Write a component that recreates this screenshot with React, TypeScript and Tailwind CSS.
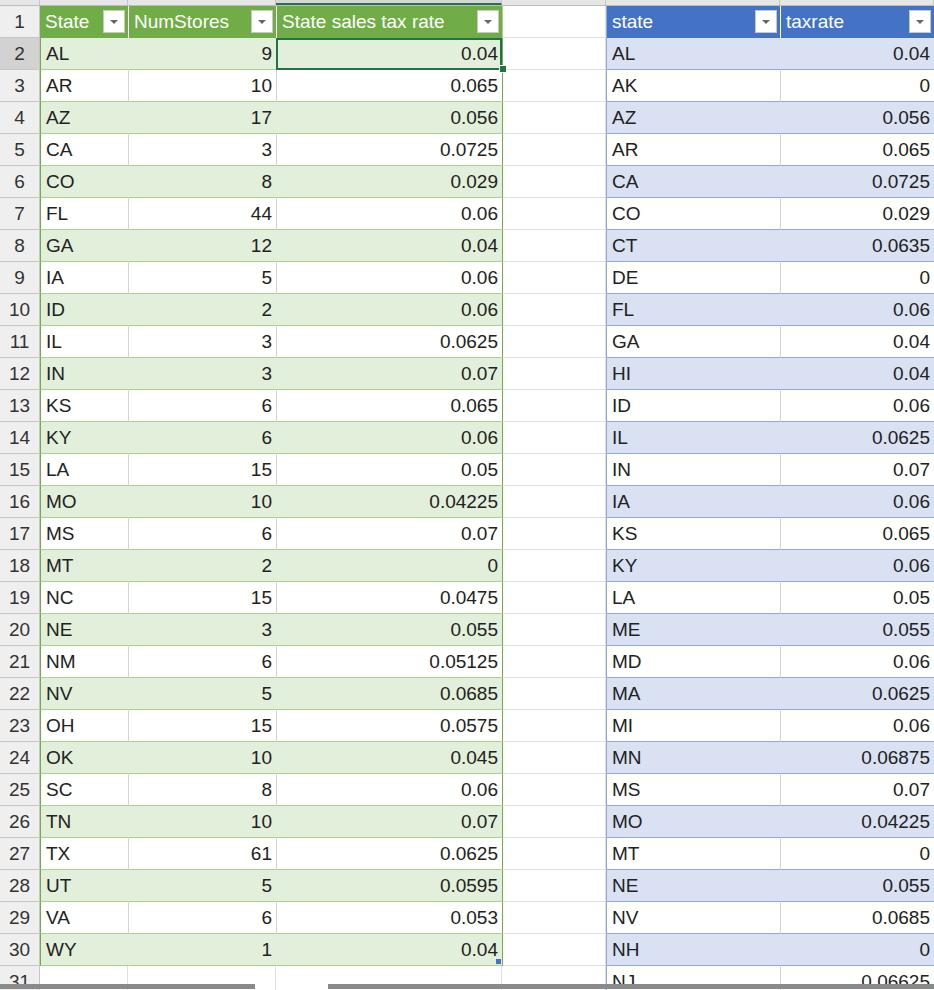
const left: [string, number, string][] = [
  ["AL", 9, "0.04"], ["AR", 10, "0.065"], ["AZ", 17, "0.056"], ["CA", 3, "0.0725"],
  ["CO", 8, "0.029"], ["FL", 44, "0.06"], ["GA", 12, "0.04"], ["IA", 5, "0.06"],
  ["ID", 2, "0.06"], ["IL", 3, "0.0625"], ["IN", 3, "0.07"], ["KS", 6, "0.065"],
  ["KY", 6, "0.06"], ["LA", 15, "0.05"], ["MO", 10, "0.04225"], ["MS", 6, "0.07"],
  ["MT", 2, "0"], ["NC", 15, "0.0475"], ["NE", 3, "0.055"], ["NM", 6, "0.05125"],
  ["NV", 5, "0.0685"], ["OH", 15, "0.0575"], ["OK", 10, "0.045"], ["SC", 8, "0.06"],
  ["TN", 10, "0.07"], ["TX", 61, "0.0625"], ["UT", 5, "0.0595"], ["VA", 6, "0.053"],
  ["WY", 1, "0.04"],
];
const right: [string, string][] = [
  ["AL", "0.04"], ["AK", "0"], ["AZ", "0.056"], ["AR", "0.065"], ["CA", "0.0725"],
  ["CO", "0.029"], ["CT", "0.0635"], ["DE", "0"], ["FL", "0.06"], ["GA", "0.04"],
  ["HI", "0.04"], ["ID", "0.06"], ["IL", "0.0625"], ["IN", "0.07"], ["IA", "0.06"],
  ["KS", "0.065"], ["KY", "0.06"], ["LA", "0.05"], ["ME", "0.055"], ["MD", "0.06"],
  ["MA", "0.0625"], ["MI", "0.06"], ["MN", "0.06875"], ["MS", "0.07"], ["MO", "0.04225"],
  ["MT", "0"], ["NE", "0.055"], ["NV", "0.0685"], ["NH", "0"], ["NJ", "0.06625"],
];

const cols = "grid-cols-[40px_88px_148px_226px_104px_174px_154px]";

function Drop() {
  return (
    <span className="absolute right-[3px] top-[4px] w-[22px] h-[23px] bg-white border border-[#c8c8c8] flex items-center justify-center">
      <span className="w-0 h-0 border-l-[4px] border-r-[4px] border-t-[4px] border-l-transparent border-r-transparent border-t-[#666]" />
    </span>
  );
}

export default function App() {
  const rows = Array.from({ length: 31 }, (_, i) => i);
  return (
    <div className="w-[934px] h-[990px] overflow-hidden bg-white text-[19px] text-[#222] relative" style={{ fontFamily: '"Liberation Sans", Arial, sans-serif' }}>
      <div className={`grid ${cols} h-[6px] bg-[#e6e6e6] border-b border-[#bdbdbd]`}>
        {Array.from({ length: 7 }).map((_, i) => (
          <div key={i} className={`border-r border-[#c6c6c6] ${i === 3 ? "bg-[#d6d6d6] border-b-2 border-b-[#217346]" : ""}`} />
        ))}
      </div>
      {rows.map((i) => {
        const n = i + 1;
        const l = i >= 1 && i <= 29 ? left[i - 1] : null;
        const r = i >= 1 ? right[i - 1] : null;
        const gBand = i >= 1 && i <= 29 && i % 2 === 1;
        const bBand = i >= 1 && i % 2 === 1;
        const g = gBand ? "bg-[#e2efda]" : "bg-white";
        const b = bBand ? "bg-[#d9e1f2]" : "bg-white";
        const gb = "border-b border-[#a9d08e]";
        const bb = "border-b border-[#8ea9db]";
        return (
          <div key={i} className={`grid ${cols} h-[32px] leading-[31px]`}>
            <div className={`border-r border-b border-[#c6c6c6] text-center text-[#333] ${n === 2 ? "bg-[#d2d2d2]" : "bg-[#efefef]"}`}>{n}</div>
            {i === 0 ? (
              <>
                <div className="relative bg-[#70ad47] text-white px-[5px] border-b border-[#70ad47] overflow-hidden whitespace-nowrap">State<Drop /></div>
                <div className="relative bg-[#70ad47] text-white px-[5px] border-l border-white overflow-hidden whitespace-nowrap">NumStores<Drop /></div>
                <div className="relative bg-[#70ad47] text-white px-[5px] border-l border-white overflow-hidden whitespace-nowrap">State sales tax rate<Drop /></div>
                <div className="border-b border-r border-[#e0e0e0] border-l border-l-[#a9d08e]" />
                <div className="relative bg-[#4472c4] text-white px-[5px] border-l border-[#8ea9db]">state<Drop /></div>
                <div className="relative bg-[#4472c4] text-white px-[5px] border-l border-white">taxrate<Drop /></div>
              </>
            ) : (
              <>
                {l ? (
                  <>
                    <div className={`${g} ${gb} px-[5px] border-l border-l-[#70ad47]`}>{l[0]}</div>
                    <div className={`${g} ${gb} px-[4px] text-right border-l ${gBand ? "border-l-[#e2efda]" : "border-l-[#d4d4d4]"}`}>{l[1]}</div>
                    <div className={`${g} ${gb} px-[4px] text-right relative border-l ${gBand ? "border-l-[#e2efda]" : "border-l-[#d4d4d4]"} ${i === 1 ? "outline-2 outline-[#217346] -outline-offset-2" : ""}`}>
                      {l[2]}
                      {i === 1 && <span className="absolute right-[-5px] bottom-[-4px] w-[8px] h-[8px] bg-[#217346] border border-white z-10" />}
                      {i === 29 && <span className="absolute right-[1px] bottom-[1px] w-[5px] h-[5px] bg-[#4472c4]" />}
                    </div>
                  </>
                ) : (
                  <>
                    <div className="border-b border-r border-[#e0e0e0]" />
                    <div className="border-b border-r border-[#e0e0e0]" />
                    <div className="border-b border-r border-[#e0e0e0]" />
                  </>
                )}
                <div className={`border-b border-r border-[#e0e0e0] ${l ? "border-l border-l-[#70ad47]" : ""}`} />
                {r && (
                  <>
                    <div className={`${b} ${bb} px-[5px] border-l border-l-[#8ea9db]`}>{r[0]}</div>
                    <div className={`${b} ${bb} px-[4px] text-right border-l ${bBand ? "border-l-[#d9e1f2]" : "border-l-[#d4d4d4]"}`}>{r[1]}</div>
                  </>
                )}
              </>
            )}
          </div>
        );
      })}
      <div className="absolute left-0 bottom-[1px] h-[5px] w-[255px] bg-[#8a8a8a]" />
      <div className="absolute left-[328px] bottom-[1px] h-[5px] w-[606px] bg-[#8a8a8a]" />
    </div>
  );
}
